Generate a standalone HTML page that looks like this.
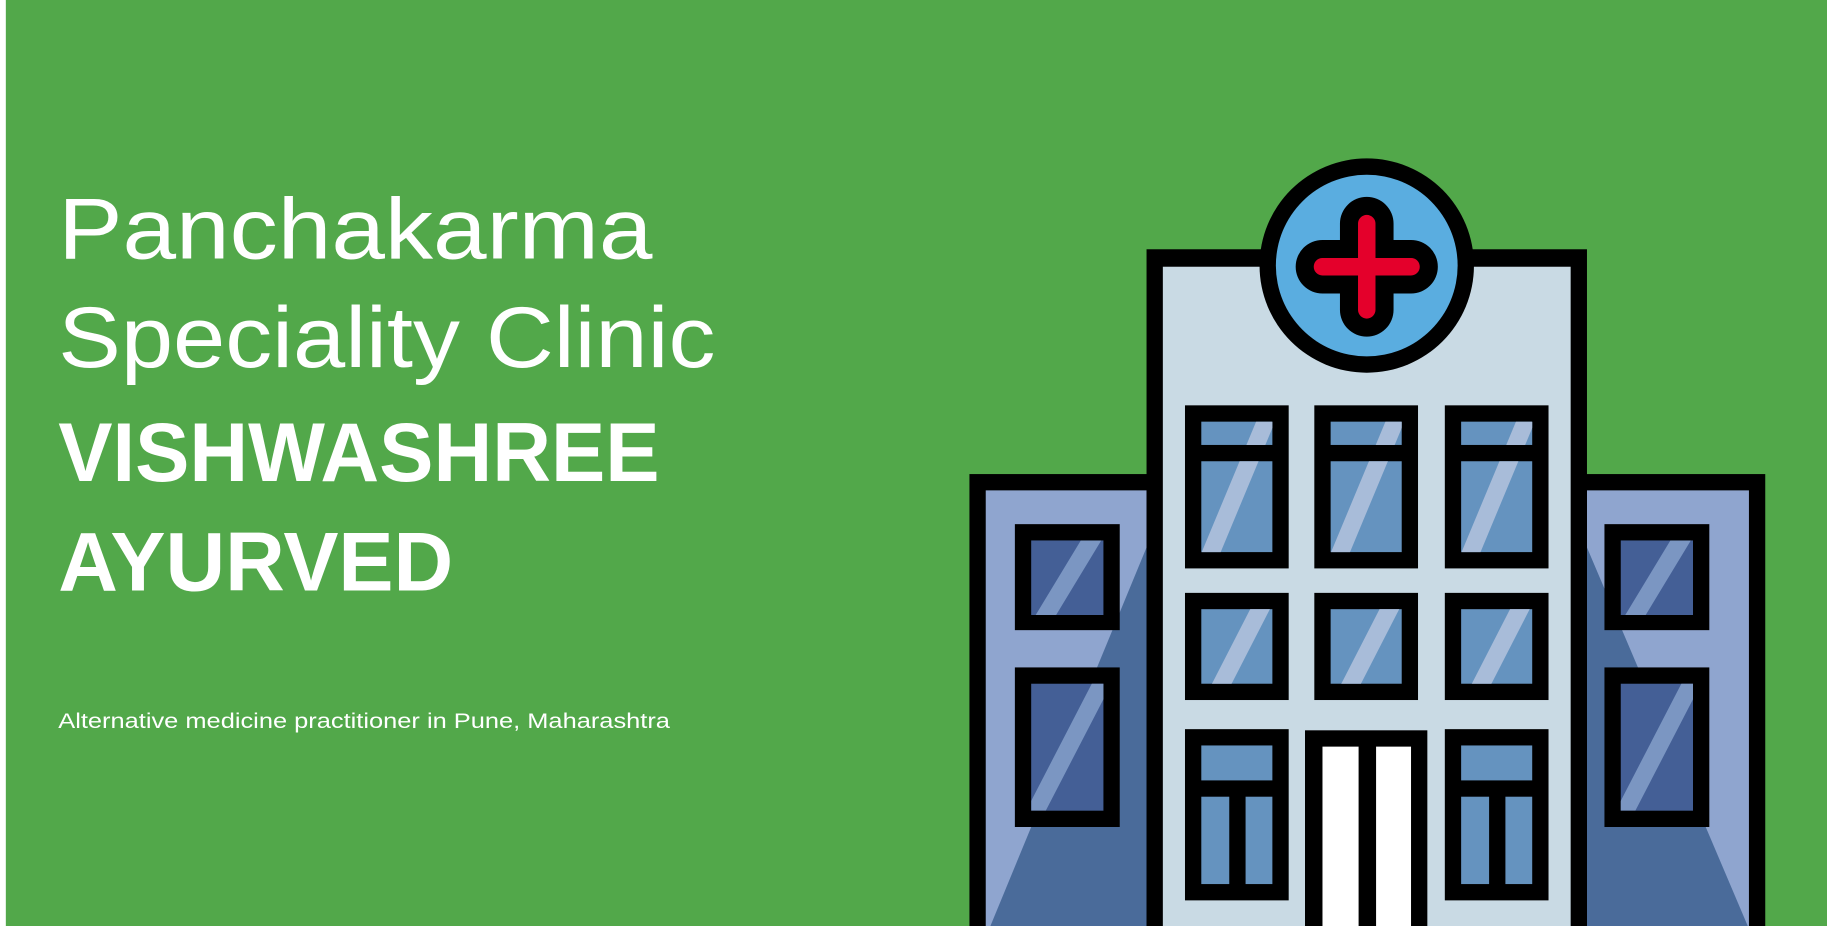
<!DOCTYPE html>
<html><head><meta charset="utf-8"><style>
html,body{margin:0;padding:0;background:#fff;}
svg{display:block;width:1827px;height:926px;}
</style></head><body>
<svg viewBox="0 0 1568 795" preserveAspectRatio="none" xmlns="http://www.w3.org/2000/svg">
<defs>
<clipPath id="c1"><rect x="1031" y="362" width="61" height="20"/><rect x="1142" y="362" width="61" height="20"/><rect x="1254" y="362" width="61" height="20"/>
<rect x="1031" y="396" width="61" height="78"/><rect x="1142" y="396" width="61" height="78"/><rect x="1254" y="396" width="61" height="78"/>
<rect x="1031" y="523" width="61" height="64"/><rect x="1142" y="523" width="61" height="64"/><rect x="1254" y="523" width="61" height="64"/>
<rect x="885" y="464" width="62" height="64"/><rect x="885" y="587" width="62" height="109"/>
<rect x="1391" y="464" width="62" height="64"/><rect x="1391" y="587" width="62" height="109"/></clipPath>
<clipPath id="lb"><rect x="846" y="421" width="138" height="374"/></clipPath>
<clipPath id="rb"><rect x="1362" y="421" width="139" height="374"/></clipPath>
</defs>
<rect x="0" y="0" width="1568" height="795" fill="#52a84a"/>
<rect x="0" y="0" width="5" height="795" fill="#fff"/>

<g font-family="'Liberation Sans', sans-serif" fill="#fff">
<text x="50" y="222" font-size="74" textLength="510" lengthAdjust="spacingAndGlyphs">Panchakarma</text>
<text x="50" y="315" font-size="74" textLength="564" lengthAdjust="spacingAndGlyphs">Speciality Clinic</text>
<text x="50" y="413" font-size="72" font-weight="bold" textLength="516" lengthAdjust="spacingAndGlyphs">VISHWASHREE</text>
<text x="50" y="507" font-size="72" font-weight="bold" textLength="339" lengthAdjust="spacingAndGlyphs">AYURVED</text>
<text x="50" y="625" font-size="18" textLength="525" lengthAdjust="spacingAndGlyphs">Alternative medicine practitioner in Pune, Maharashtra</text>
</g>

<rect x="832" y="407" width="170" height="400" fill="#000"/>
<rect x="846" y="421" width="138" height="380" fill="#8fa5cf"/>
<polygon clip-path="url(#lb)" points="984,470 850,795 984,795" fill="#4a6b9a"/>
<rect x="1346" y="407" width="169" height="400" fill="#000"/>
<rect x="1362" y="421" width="139" height="380" fill="#8fa5cf"/>
<polygon clip-path="url(#rb)" points="1362,470 1500,795 1362,795" fill="#4a6b9a"/>

<rect x="984" y="214" width="378" height="600" fill="#000"/>
<rect x="998" y="229" width="350" height="580" fill="#c9dae4"/>

<circle cx="1173" cy="228" r="92" fill="#000"/>
<circle cx="1173" cy="228" r="78" fill="#5aade0"/>
<path d="M1173 192V266M1135 229H1211" stroke="#000" stroke-width="46" stroke-linecap="round"/>
<path d="M1173 192V266M1135 229H1211" stroke="#e4002b" stroke-width="15" stroke-linecap="round"/>

<g fill="#000">
<rect x="871" y="450" width="90" height="91"/><rect x="871" y="573" width="90" height="137"/>
<rect x="1377" y="450" width="90" height="91"/><rect x="1377" y="573" width="90" height="137"/>
</g>
<g fill="#445f96">
<rect x="885" y="464" width="62" height="64"/><rect x="885" y="587" width="62" height="109"/>
<rect x="1391" y="464" width="62" height="64"/><rect x="1391" y="587" width="62" height="109"/>
</g>

<g fill="#000">
<rect x="1017" y="348" width="89" height="140"/><rect x="1128" y="348" width="89" height="140"/><rect x="1240" y="348" width="89" height="140"/>
<rect x="1017" y="509" width="89" height="92"/><rect x="1128" y="509" width="89" height="92"/><rect x="1240" y="509" width="89" height="92"/>
<rect x="1017" y="626" width="89" height="147"/><rect x="1240" y="626" width="89" height="147"/>
<rect x="1120" y="627" width="105" height="180"/>
</g>
<g fill="#6593bf">
<rect x="1031" y="362" width="61" height="20"/><rect x="1142" y="362" width="61" height="20"/><rect x="1254" y="362" width="61" height="20"/>
<rect x="1031" y="396" width="61" height="78"/><rect x="1142" y="396" width="61" height="78"/><rect x="1254" y="396" width="61" height="78"/>
<rect x="1031" y="523" width="61" height="64"/><rect x="1142" y="523" width="61" height="64"/><rect x="1254" y="523" width="61" height="64"/>
<rect x="1031" y="640" width="61" height="30"/><rect x="1254" y="640" width="61" height="30"/>
<rect x="1031" y="684" width="24" height="75"/><rect x="1069" y="684" width="23" height="75"/>
<rect x="1254" y="684" width="24" height="75"/><rect x="1292" y="684" width="23" height="75"/>
</g>
<g fill="#fff"><rect x="1135" y="641" width="31" height="160"/><rect x="1181" y="641" width="30" height="160"/></g>

<g clip-path="url(#c1)" stroke-width="15">
<g stroke="#a8bcd9">
<path d="M1037 480L1087 360M1148 480L1198 360M1260 480L1310 360"/>
<path d="M1045 594L1085 516M1156 594L1196 516M1268 594L1308 516"/>
</g>
<g stroke="#7b96c2">
<path d="M894 534L940 458M1400 534L1446 458"/>
<path d="M887 700L947 584M1393 700L1453 584"/>
</g>
</g>
</svg>
</body></html>
